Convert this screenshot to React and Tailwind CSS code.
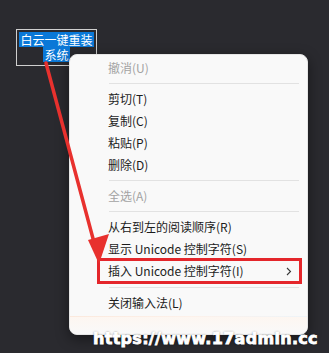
import React from "react";

const font = { fontFamily: '"Noto Sans CJK SC", "Noto Sans", sans-serif' };

function Item({ label, disabled, chevron }) {
  return (
    <div
      className={`h-[22px] flex items-center pl-[38px] pr-[14px] text-[12px] leading-none ${
        disabled ? "text-[#a3a3a3]" : "text-[#1c1c1c]"
      }`}
    >
      <span className="flex-1 whitespace-nowrap">{label}</span>
      {chevron && (
        <svg width="6" height="9" viewBox="0 0 6 9" className="mr-[1px]">
          <path d="M1 1 L4.5 4.5 L1 8" fill="none" stroke="#3a3a3a" strokeWidth="1.1" />
        </svg>
      )}
    </div>
  );
}

function Sep({ className = "py-[4px]" }) {
  return (
    <div className={className}>
      <div className="h-px bg-[#e2e2e2] ml-[39px] mr-[8px]" />
    </div>
  );
}

export default function App() {
  return (
    <div
      className="relative w-[329px] h-[353px] overflow-hidden bg-[#2a2a2f]"
      style={font}
    >
      {/* desktop icon label */}
      <div className="absolute left-[16px] top-[29px] w-[81px] h-[37px] border border-[#cfcfcf] flex flex-col items-center pt-[2px]">
        <div className="bg-[#0a78d7] text-white text-[12px] leading-[15px] h-[15px] px-[1px] whitespace-nowrap">
          白云一键重装
        </div>
        <div className="bg-[#0a78d7] text-white text-[12px] leading-[15px] h-[15px] px-[1px] whitespace-nowrap">
          系统
        </div>
      </div>

      {/* context menu */}
      <div className="absolute left-[69px] top-[54px] w-[239px] h-[281px] bg-[#f9f9f9] rounded-[8px] border border-[#e6e6e6] shadow-[0_4px_14px_rgba(0,0,0,0.45)] flex flex-col pt-[2px] overflow-hidden">
        <Item label="撤消(U)" disabled />
        <Sep />
        <Item label="剪切(T)" />
        <Item label="复制(C)" />
        <Item label="粘贴(P)" />
        <Item label="删除(D)" />
        <Sep />
        <Item label="全选(A)" disabled />
        <Sep />
        <Item label="从右到左的阅读顺序(R)" />
        <Item label="显示 Unicode 控制字符(S)" />
        <Item label="插入 Unicode 控制字符(I)" chevron />
        <Sep className="pt-[5px] pb-[4px]" />
        <Item label="关闭输入法(L)" />
        <div className="flex-1 flex flex-col">
          <div className="h-[2px]" />
          <div className="h-[1px] bg-gradient-to-r from-[#fbe9dd] via-[#fdf1ea] to-[#eef4f8]" />
          <div className="flex-1 bg-gradient-to-b from-[#fdf6f1] to-[#f9f9f9]" />
        </div>
        {/* red highlight box */}
        <div className="absolute left-[27px] top-[203px] w-[205px] h-[26px] border-[3px] border-[#e4262b]" />
      </div>

      {/* red arrow */}
      <svg
        className="absolute left-0 top-0 pointer-events-none"
        width="329"
        height="353"
        viewBox="0 0 329 353"
      >
        <path d="M46 63 L95 246" stroke="#e8312e" strokeWidth="3.5" strokeLinecap="round" fill="none" />
        <polygon points="88,240 109,234 99,264" fill="#e8312e" />
      </svg>

      {/* watermark */}
      <div
        className="absolute left-[93px] top-[331px] text-white text-[16px] leading-[16px] font-bold tracking-[0.3px] whitespace-nowrap [-webkit-text-stroke:0.8px_white] [text-shadow:0_0_2px_rgba(0,0,0,0.8)]"
        style={{ fontFamily: '"DejaVu Sans", sans-serif' }}
      >
        https://www.17admin.cc
      </div>
    </div>
  );
}
